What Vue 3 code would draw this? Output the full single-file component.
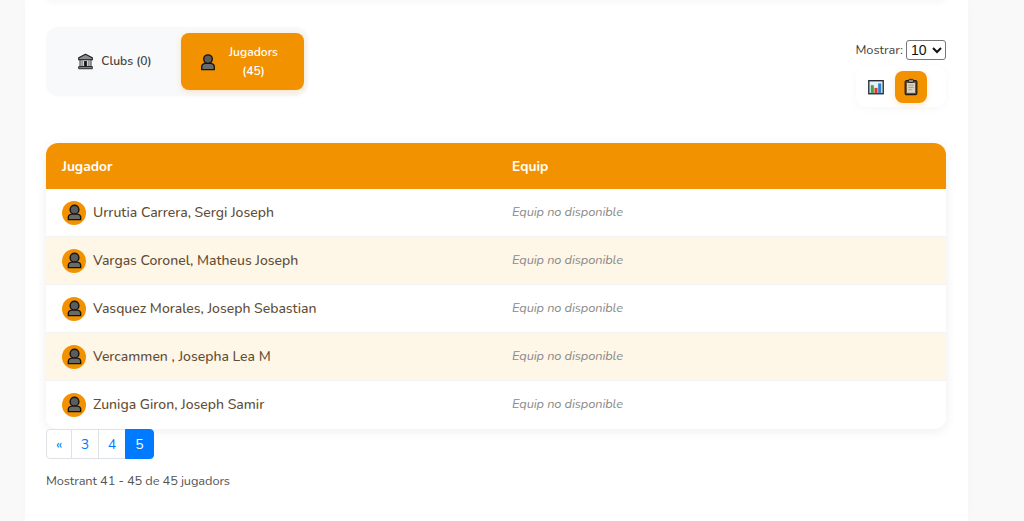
<script setup>
const rows = [
  'Urrutia Carrera, Sergi Joseph',
  'Vargas Coronel, Matheus Joseph',
  'Vasquez Morales, Joseph Sebastian',
  'Vercammen , Josepha Lea M',
  'Zuniga Giron, Joseph Samir'
]
const pages = ['«', '3', '4', '5']
</script>

<template>
  <div class="page">
    <main class="card">
      <div class="top-strip"></div>
      <div class="toolbar">
        <div class="tabs">
          <button class="tab first">
            <svg class="ico small" viewBox="0 0 20 20">
              <path d="M10 1.500 2 5.500v2.500h16V5.500z" fill="#8f8f8f" stroke="#1c1c1c" stroke-width="1.300" stroke-linejoin="round"/>
              <path d="M3.500 8h13v8h-13z" fill="#d4d4d4" stroke="#1c1c1c" stroke-width="1"/>
              <path d="M6 8.500v7M14 8.500v7" stroke="#7a7a7a" stroke-width="1.300"/>
              <path d="M8.300 9.500h3.400v6.300H8.300z" fill="#1c1c1c"/>
              <path d="M2 16h16v2.500H2z" fill="#8f8f8f" stroke="#1c1c1c" stroke-width="1.100"/>
            </svg>
            <span>Clubs (0)</span>
          </button>
          <button class="tab active">
            <svg class="ico" viewBox="0 0 20 20">
              <circle cx="10" cy="6.800" r="4.800" fill="#5c5c5c" stroke="#151515" stroke-width="1.500"/>
              <path d="M3 18.500v-3c0-2.500 2-3.800 4-4h6c2 .2 4 1.500 4 4v3z" fill="#6a6a6a" stroke="#151515" stroke-width="1.500" stroke-linejoin="round"/>
            </svg>
            <span class="tab-label">Jugadors<br>(45)</span>
          </button>
        </div>
        <div class="side">
          <label class="show">Mostrar:
            <select class="sel"><option>10</option></select>
          </label>
          <div class="views">
            <button class="view">
              <svg class="ico" viewBox="0 0 20 20">
                <rect x="2" y="3" width="16" height="14.500" fill="#e6eff5" stroke="#1f2a33" stroke-width="1.500"/>
                <rect x="4.200" y="8" width="3.400" height="8.800" fill="#3da84a"/>
                <rect x="8.300" y="11" width="3.400" height="5.800" fill="#e0392b"/>
                <rect x="12.400" y="6" width="3.400" height="10.800" fill="#2f7fd0"/>
              </svg>
            </button>
            <button class="view on">
              <svg class="ico" viewBox="0 0 20 20">
                <rect x="3.500" y="3" width="13" height="15.500" rx="1.500" fill="#6b5236" stroke="#1f1a16" stroke-width="1.300"/>
                <rect x="5.500" y="5.500" width="9" height="11" fill="#d9d3c6"/>
                <rect x="7.300" y="1.500" width="5.400" height="3.500" rx="1" fill="#8f8f8f" stroke="#1f1a16" stroke-width="1"/>
                <path d="M7 8h6M7 10.500h6M7 13h4" stroke="#a39c8e" stroke-width="1"/>
              </svg>
            </button>
          </div>
        </div>
      </div>

      <div class="table">
        <div class="row head">
          <div class="cell">Jugador</div>
          <div class="cell">Equip</div>
        </div>
        <div v-for="(r, i) in rows" :key="r" class="row body" :class="{ alt: i % 2 === 1, last: i === rows.length - 1 }">
          <div class="cell name">
            <span class="avatar">
              <svg viewBox="0 0 20 20" class="avatar-ico">
                <circle cx="10" cy="7" r="4.600" fill="#5c5c5c" stroke="#151515" stroke-width="1.500"/>
                <path d="M3.500 17.500v-2.300c0-2.200 1.800-3.300 3.700-3.500h5.600c1.900.2 3.700 1.300 3.700 3.500v2.300z" fill="#6a6a6a" stroke="#151515" stroke-width="1.500" stroke-linejoin="round"/>
              </svg>
            </span>
            <span class="nm">{{ r }}</span>
          </div>
          <div class="cell none">Equip no disponible</div>
        </div>
      </div>

      <nav class="pager">
        <a v-for="p in pages" :key="p" class="pg" :class="{ cur: p === '5' }">{{ p }}</a>
      </nav>
      <p class="count">Mostrant 41 - 45 de 45 jugadors</p>
    </main>
  </div>
</template>

<style>
html, body { margin: 0; overflow: hidden; background: #f9f9f9; }
</style>

<style scoped>
.page {
  width: 1024px;
  height: 521px;
  overflow: hidden;
  background: #f9f9f9;
  font-family: "Nunito", "Noto Sans", sans-serif;
}
.card {
  display: flow-root;
  box-sizing: border-box;
  width: 943px;
  height: 521px;
  margin-left: 25px;
  padding: 0 22px 0 21px;
  background: #fff;
  box-shadow: 0 0 12px rgba(0, 0, 0, .02);
}
.top-strip {
  height: 4px;
  margin-top: -4px;
  box-shadow: 0 1px 6px rgba(0, 0, 0, .06);
  border-radius: 8px;
}
.toolbar {
  display: flex;
  justify-content: space-between;
  align-items: flex-start;
  padding-top: 27px;
  height: 116px;
}
.tabs {
  display: flex;
  gap: 6px;
  padding: 6px 4px 6px 6px;
  width: 262px;
  height: 69px;
  box-sizing: border-box;
  background: #f8f9fa;
  border-radius: 12px;
  box-shadow: 0 1px 6px rgba(0, 0, 0, .015);
}
.tab {
  flex: 0 0 123px;
  display: flex;
  align-items: center;
  justify-content: center;
  gap: 6px;
  border: 0;
  background: transparent;
  border-radius: 8px;
  padding: 0;
  font: 600 12.100px/19px "Nunito", "Noto Sans", sans-serif;
  color: #444;
}
.tab.first { gap: 7px; padding-left: 2px; }
.tab.active {
  background: #f39200;
  color: #fff;
  box-shadow: 0 2px 6px rgba(243, 146, 0, .2);
}
.tab-label {
  width: 66px;
  text-align: center;
  margin-left: -2px;
}
.ico { width: 18px; height: 18px; display: block; }
.ico.small { width: 17px; height: 17px; }
.side {
  display: flex;
  flex-direction: column;
  align-items: flex-end;
  padding-top: 12px;
  gap: 6px;
}
.show {
  font-size: 12.800px;
  color: #444;
  display: flex;
  align-items: center;
  gap: 3px;
  height: 21px;
}
.sel {
  width: 40px;
  height: 20px;
  font: 14px "Liberation Sans", sans-serif;
  background: #fff;
  color: #111;
  border: 1px solid #767676;
  border-radius: 3px;
  padding: 0;
}
.views {
  display: flex;
  gap: 3px;
  padding: 5px 19px 5px 4px;
  width: 90px;
  height: 41px;
  box-sizing: border-box;
  background: #fff;
  border-radius: 10px;
  box-shadow: 0 2px 8px rgba(0, 0, 0, .035);
}
.view {
  width: 32px;
  height: 32px;
  border: 0;
  padding: 0;
  background: transparent;
  border-radius: 8px;
  display: flex;
  align-items: center;
  justify-content: center;
}
.view.on {
  background: #f39200;
  box-shadow: 0 2px 6px rgba(243, 146, 0, .2);
}
.table {
  border-radius: 12px;
  overflow: hidden;
  box-shadow: 0 2px 12px rgba(0, 0, 0, .07);
  background: #fff;
}
.row {
  display: grid;
  grid-template-columns: 450px 450px;
  height: 48px;
  box-sizing: border-box;
  border-bottom: 1px solid #f3f3f3;
  align-items: center;
  background: #fff;
}
.row.last { border-bottom-color: transparent; }
.row.alt { background: #fef6e7; }
.row.head {
  height: 46px;
  background: #f39200;
  border-bottom: 0;
  color: #fff;
  font-weight: 700;
  font-size: 13.800px;
}
.cell { padding-left: 16px; }
.name {
  display: flex;
  align-items: center;
  gap: 7px;
  font-size: 14px;
  font-weight: 500;
  color: #5f4d36;
}
.nm { margin-top: -1px; }
.none {
  font-size: 12.800px;
  letter-spacing: -.1px;
  font-style: italic;
  color: #8a8a8a;
  padding-bottom: 2px;
}
.avatar {
  width: 24px;
  height: 24px;
  border-radius: 50%;
  background: #f39200;
  display: flex;
  align-items: center;
  justify-content: center;
  flex: none;
}
.avatar-ico { width: 19px; height: 19px; }
.pager {
  display: grid;
  grid-template-columns: 26px 27px 27px 28px;
  width: 108px;
  height: 30px;
}
.pg {
  display: flex;
  align-items: center;
  justify-content: center;
  box-sizing: border-box;
  border: 1px solid #dee2e6;
  margin-left: -1px;
  background: #fff;
  color: #007bff;
  font-size: 14px;
}
.pg:first-child { margin-left: 0; border-radius: 4px 0 0 4px; }
.pg:last-child { border-radius: 0 4px 4px 0; }
.pg.cur { background: #007bff; border-color: #007bff; color: #fff; }
.count {
  margin: 14px 0 0;
  font-size: 12.800px;
  letter-spacing: -.1px;
  line-height: 17px;
  color: #555;
}
</style>
